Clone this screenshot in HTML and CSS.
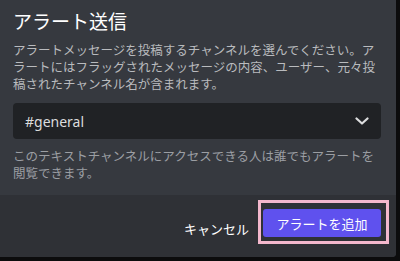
FILE: index.html
```html
<!DOCTYPE html>
<html lang="ja">
<head>
<meta charset="utf-8">
<link rel="stylesheet" href="styles.css">
</head>
<body>
<div class="modal">
  <div class="content">
    <h1 class="title">アラート送信</h1>
    <p class="desc">アラートメッセージを投稿するチャンネルを選んでください。アラートにはフラッグされたメッセージの内容、ユーザー、元々投稿されたチャンネル名が含まれます。</p>
    <div class="select">
      <span class="select-value">#general</span>
      <svg class="chevron" width="14" height="8" viewBox="0 0 14 8"><path d="M1.5 1.5 L7 6.5 L12.5 1.5" fill="none" stroke="#dcddde" stroke-width="2.2" stroke-linecap="round" stroke-linejoin="round"/></svg>
    </div>
    <p class="help">このテキストチャンネルにアクセスできる人は誰でもアラートを閲覧できます。</p>
  </div>
  <div class="footer">
    <button class="cancel">キャンセル</button>
    <span class="highlight"><button class="primary">アラートを追加</button></span>
  </div>
</div>
</body>
</html>
```
FILE: styles.css
```css
html, body {
  margin: 0;
  padding: 0;
  background: #0c0c0d;
  width: 400px;
  height: 261px;
  overflow: hidden;
}
.modal {
  width: 396px;
  height: 257px;
  display: flex;
  flex-direction: column;
  background: #36393f;
  border-radius: 0 0 4px 0;
  overflow: hidden;
  font-family: "Noto Sans CJK JP", "Noto Sans", sans-serif;
}
.content {
  height: 195px;
  box-sizing: border-box;
  padding: 9px 13px 0 13px;
}
.title {
  margin: 0 0 8px 0;
  font-size: 19px;
  line-height: 24px;
  font-weight: 400;
  color: #ffffff;
}
.desc {
  margin: 0;
  width: 370px;
  font-size: 12.5px;
  line-height: 17px;
  color: #b9bbbe;
}
.select {
  margin-top: 11px;
  width: 368px;
  height: 36px;
  box-sizing: border-box;
  background: #202225;
  border-radius: 4px;
  display: flex;
  align-items: center;
  justify-content: space-between;
  padding: 0 12px 0 12px;
}
.select-value {
  font-family: "Noto Sans", sans-serif;
  font-size: 14px;
  color: #dcddde;
}
.chevron {
  display: block;
}
.help {
  margin: 8px 0 0 0;
  width: 370px;
  font-size: 12.5px;
  line-height: 17px;
  color: #9b9ea3;
}
.footer {
  flex: 1;
  background: #2f3136;
  display: flex;
  align-items: center;
  justify-content: flex-end;
  padding-right: 7px;
}
.cancel {
  background: none;
  border: none;
  font-family: inherit;
  font-size: 13px;
  color: #ffffff;
  padding: 0;
  margin-right: 9px;
  margin-top: 4px;
}
.highlight {
  display: flex;
  border: 3px solid #f4b8cd;
  padding: 6px 5px 4px 2px;
  margin-top: -8px;
}
.primary {
  width: 118px;
  height: 28px;
  background: #5f51ee;
  border: none;
  border-radius: 3px;
  font-family: inherit;
  font-size: 13px;
  color: #ffffff;
  padding: 0;
}
```
